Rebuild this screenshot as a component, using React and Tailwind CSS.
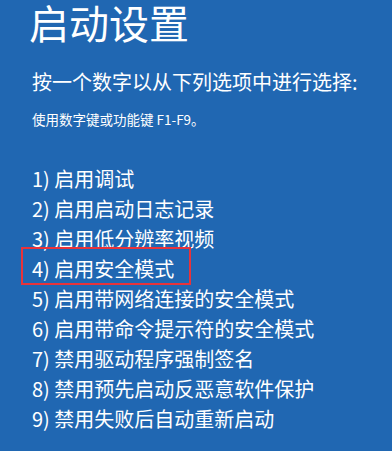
const items = [
  "1) 启用调试",
  "2) 启用启动日志记录",
  "3) 启用低分辨率视频",
  "4) 启用安全模式",
  "5) 启用带网络连接的安全模式",
  "6) 启用带命令提示符的安全模式",
  "7) 禁用驱动程序强制签名",
  "8) 禁用预先启动反恶意软件保护",
  "9) 禁用失败后自动重新启动",
];

const font = { fontFamily: '"Noto Sans CJK SC", "Noto Sans", sans-serif' };

export default function App() {
  return (
    <div
      className="w-[392px] h-[451px] bg-[#2067b2] text-white overflow-hidden"
      style={font}
    >
      <h1 className="pl-[29px] pt-0 text-[40px] leading-[44px] font-normal">启动设置</h1>
      <p className="pl-[32px] mt-[26px] text-[20px] leading-[24px]">按一个数字以从下列选项中进行选择:</p>
      <p className="pl-[32px] mt-[17px] text-[13.5px] leading-[16px]">使用数字键或功能键 F1-F9。</p>

      <ul className="pl-[32px] mt-[37px]">
        {items.map((item, i) => (
          <li key={i} className="relative h-[30px] text-[20px] leading-[30px]">
            {item}
            {i === 3 && (
              <span className="absolute left-[-11px] top-[-7px] w-[170px] h-[38px] border-2 border-[#e8333a]" />
            )}
          </li>
        ))}
      </ul>
    </div>
  );
}
